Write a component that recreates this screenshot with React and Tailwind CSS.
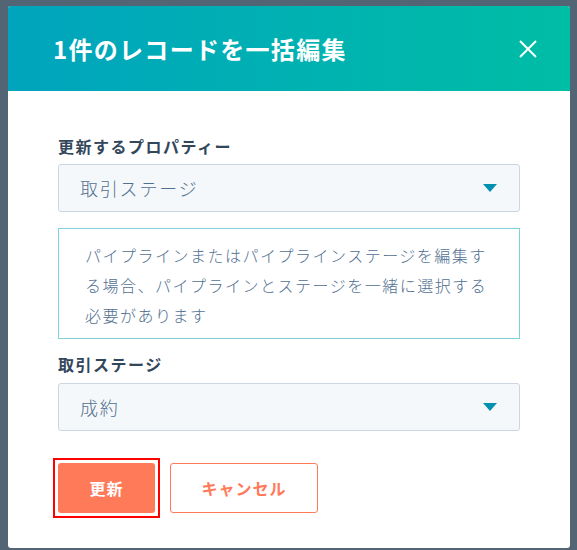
import React from 'react';

const jp = { fontFamily: '"Noto Sans CJK JP", "Noto Sans", sans-serif' };

function Caret() {
  return (
    <svg width="14" height="8" viewBox="0 0 14 8" className="shrink-0">
      <path d="M0 0 H14 L7 8 Z" fill="#0091ae" />
    </svg>
  );
}

function SelectBox({ value }) {
  return (
    <button
      type="button"
      className="flex h-[48px] w-full items-center justify-between rounded-[3px] border border-[#cbd6e2] bg-[#f5f8fa] pl-[21px] pr-[22px] text-left text-[18px] font-light tracking-[1.8px] text-[#516f90]"
    >
      <span>{value}</span>
      <Caret />
    </button>
  );
}

export default function App() {
  return (
    <div className="h-[550px] w-[577px] bg-[#536475] pl-[8px] pt-[6px]" style={jp}>
      <div className="w-[562px] overflow-hidden rounded-[3px] bg-white">
        <div className="flex h-[85px] items-center justify-between bg-gradient-to-r from-[#00a4bd] to-[#00bda5] pl-[45px] pr-[33px]">
          <h1 className="text-[24px] font-bold tracking-[1.3px] text-white">1件のレコードを一括編集</h1>
          <svg width="18" height="18" viewBox="0 0 18 18">
            <path d="M1 1 L17 17 M17 1 L1 17" stroke="#fff" strokeWidth="2" />
          </svg>
        </div>

        <div className="px-[50px] pb-[30px] pt-[43px]">
          <label className="block text-[16px] font-bold leading-[24px] tracking-[1.5px] text-[#33475b]">
            更新するプロパティー
          </label>
          <div className="mt-[6px]">
            <SelectBox value="取引ステージ" />
          </div>

          <div className="mt-[16px] border border-[#7fd1de] pb-[8px] pl-[26px] pr-[20px] pt-[11px]">
            <p className="max-w-[405px] text-[16px] font-light leading-[30px] tracking-[1.5px] text-[#516f90]">
              パイプラインまたはパイプラインステージを編集する場合、パイプラインとステージを一緒に選択する必要があります
            </p>
          </div>

          <label className="mt-[13px] block text-[16px] font-bold leading-[24px] tracking-[1.5px] text-[#33475b]">
            取引ステージ
          </label>
          <div className="mt-[7px]">
            <SelectBox value="成約" />
          </div>

          <div className="mt-[27px] flex items-center gap-[10px]">
            <div className="-ml-[5px] border-2 border-[#ff0000] p-[3px]">
              <button
                type="button"
                className="block h-[50px] w-[97px] rounded-[3px] bg-[#ff7a59] text-[16px] font-bold tracking-[1px] text-white"
              >
                更新
              </button>
            </div>
            <button
              type="button"
              className="h-[50px] w-[148px] rounded-[3px] border border-[#ff7a59] bg-white text-[16px] font-bold tracking-[1px] text-[#ff7a59]"
            >
              キャンセル
            </button>
          </div>
        </div>
      </div>
    </div>
  );
}
